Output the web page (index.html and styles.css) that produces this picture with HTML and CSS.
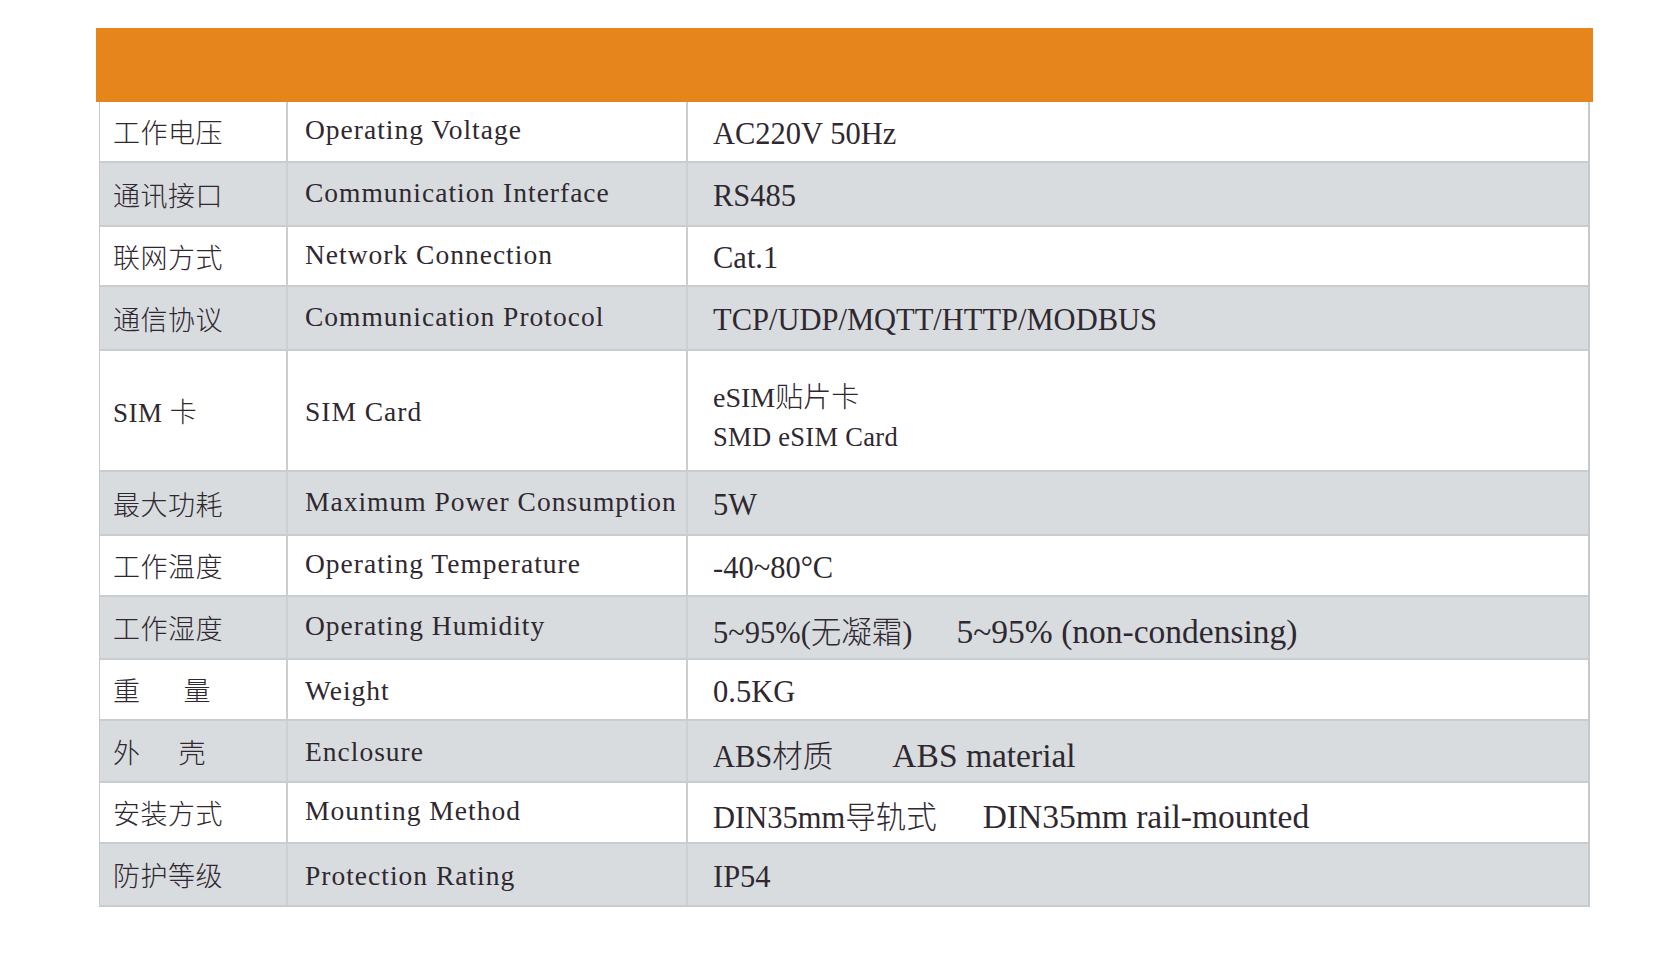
FILE: index.html
```html
<!DOCTYPE html>
<html lang="zh-CN">
<head>
<meta charset="utf-8">
<title>Specifications</title>
<link rel="stylesheet" href="styles.css">
</head>
<body>
<div class="sheet">
  <div class="banner"></div>
  <div class="spec">
    <div class="row white h59"><div class="c1">工作电压</div><div class="c2">Operating Voltage</div><div class="c3"><span>AC220V 50Hz</span></div></div>
    <div class="row gray h64"><div class="c1">通讯接口</div><div class="c2">Communication Interface</div><div class="c3"><span>RS485</span></div></div>
    <div class="row white h60"><div class="c1">联网方式</div><div class="c2">Network Connection</div><div class="c3"><span>Cat.1</span></div></div>
    <div class="row gray h64"><div class="c1">通信协议</div><div class="c2">Communication Protocol</div><div class="c3"><span>TCP/UDP/MQTT/HTTP/MODBUS</span></div></div>
    <div class="row white h121"><div class="c1">SIM 卡</div><div class="c2 mid">SIM Card</div><div class="c3 stack"><span class="l1">eSIM贴片卡</span><span class="l2">SMD eSIM Card</span></div></div>
    <div class="row gray h64"><div class="c1">最大功耗</div><div class="c2">Maximum Power Consumption</div><div class="c3"><span>5W</span></div></div>
    <div class="row white h61"><div class="c1">工作温度</div><div class="c2">Operating Temperature</div><div class="c3"><span>-40~80°C</span></div></div>
    <div class="row gray h63"><div class="c1">工作湿度</div><div class="c2">Operating Humidity</div><div class="c3"><span>5~95%(无凝霜)<span class="gap44"></span><span class="en">5~95% (non-condensing)</span></span></div></div>
    <div class="row white h61"><div class="c1">重<span class="gap43"></span>量</div><div class="c2 mid">Weight</div><div class="c3"><span>0.5KG</span></div></div>
    <div class="row gray h62"><div class="c1">外<span class="gap38"></span>壳</div><div class="c2 mid">Enclosure</div><div class="c3"><span>ABS材质<span class="gap59"></span><span class="en">ABS material</span></span></div></div>
    <div class="row white h61"><div class="c1">安装方式</div><div class="c2">Mounting Method</div><div class="c3"><span>DIN35mm导轨式<span class="gap46"></span><span class="en">DIN35mm rail-mounted</span></span></div></div>
    <div class="row gray h63 last"><div class="c1">防护等级</div><div class="c2 mid">Protection Rating</div><div class="c3"><span>IP54</span></div></div>
  </div>
</div>
</body>
</html>
```

FILE: styles.css
```css
* { box-sizing: border-box; }
html, body { margin: 0; padding: 0; background: #ffffff; }
body {
  font-family: "Liberation Serif", "Noto Sans CJK SC", serif;
  font-weight: 300;
  color: #2f2830;
}
.sheet {
  width: 1497px;
  margin: 28px 0 0 96px;
}
.banner {
  height: 74px;
  background: #e5851b;
}
.spec {
  margin: 0 3px;
  border-left: 1px solid #c6c8cc;
  border-right: 2px solid #c6c9cc;
  border-bottom: 2px solid #c9cccf;
}
.row {
  display: grid;
  grid-template-columns: 188px 400px 1fr;
  border-top: 2px solid #c9cdd0;
}
.row:first-child { border-top: none; }
.white { background: #ffffff; }
.gray { background: #d8dcdf; }
.h59 { height: 59px; }
.h60 { height: 60px; }
.h61 { height: 61px; }
.h62 { height: 62px; }
.h63 { height: 63px; }
.h64 { height: 64px; }
.h121 { height: 121px; }
.c1, .c2, .c3 {
  display: flex;
  align-items: center;
  white-space: nowrap;
}
.c1 {
  padding-left: 13px;
  font-size: 27px;
  letter-spacing: 0.5px;
  border-right: 2px solid #cbcdd1;
}
.gray .c1 { border-right-color: #cdd1d4; }
.c2 {
  padding-left: 17px;
  padding-bottom: 3px;
  font-size: 27.5px;
  letter-spacing: 1px;
  border-right: 2px solid #cbcdd1;
}
.gray .c2 { border-right-color: #cdd1d4; }
.c2.mid { padding-bottom: 0; padding-top: 2px; }
.c3 {
  padding-left: 25px;
  padding-top: 5px;
  font-size: 30.5px;
}
.en { font-size: 33.5px; }
.stack {
  flex-direction: column;
  align-items: flex-start;
  justify-content: center;
  padding-top: 14px;
  padding-bottom: 0;
}
.l1 { font-size: 28px; line-height: 38px; }
.l2 { font-size: 26.5px; line-height: 40px; letter-spacing: 0.3px; }
.gap38 { display: inline-block; width: 38px; }
.gap43 { display: inline-block; width: 43px; }
.gap44 { display: inline-block; width: 44px; }
.gap46 { display: inline-block; width: 46px; }
.gap59 { display: inline-block; width: 59px; }
```
